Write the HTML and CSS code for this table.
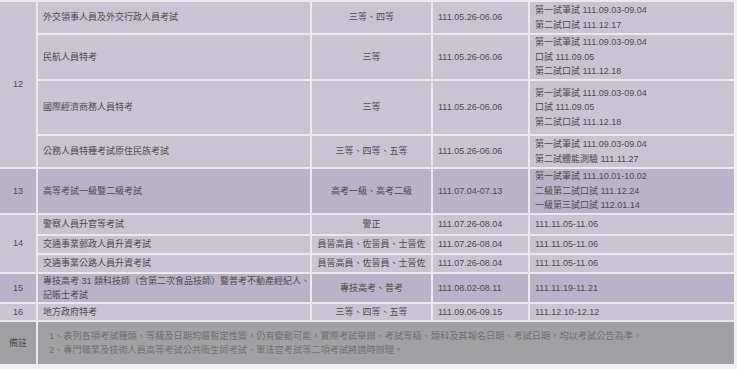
FILE: index.html
```html
<!DOCTYPE html>
<html lang="zh-Hant">
<head>
<meta charset="utf-8">
<title>考試日程</title>
<link rel="stylesheet" href="styles.css">
</head>
<body>
<table class="sched">
  <colgroup>
    <col class="c-no">
    <col class="c-name">
    <col class="c-level">
    <col class="c-reg">
    <col class="c-exam">
  </colgroup>
  <tbody>
    <tr class="light h33">
      <td class="no" rowspan="4">12</td>
      <td class="name">外交領事人員及外交行政人員考試</td>
      <td class="level">三等、四等</td>
      <td class="reg">111.05.26-06.06</td>
      <td class="exam">第一試筆試 111.09.03-09.04<br>第二試口試 111.12.17</td>
    </tr>
    <tr class="light h46">
      <td class="name">民航人員特考</td>
      <td class="level">三等</td>
      <td class="reg">111.05.26-06.06</td>
      <td class="exam">第一試筆試 111.09.03-09.04<br>口試 111.09.05<br>第二試口試 111.12.18</td>
    </tr>
    <tr class="light h55">
      <td class="name">國際經濟商務人員特考</td>
      <td class="level">三等</td>
      <td class="reg">111.05.26-06.06</td>
      <td class="exam">第一試筆試 111.09.03-09.04<br>口試 111.09.05<br>第二試口試 111.12.18</td>
    </tr>
    <tr class="light h33">
      <td class="name">公務人員特種考試原住民族考試</td>
      <td class="level">三等、四等、五等</td>
      <td class="reg">111.05.26-06.06</td>
      <td class="exam">第一試筆試 111.09.03-09.04<br>第二試體能測驗 111.11.27</td>
    </tr>
    <tr class="dark h46">
      <td class="no">13</td>
      <td class="name">高等考試一級暨二級考試</td>
      <td class="level">高考一級、高考二級</td>
      <td class="reg">111.07.04-07.13</td>
      <td class="exam">第一試筆試 111.10.01-10.02<br>二級第二試口試 111.12.24<br>一級第三試口試 112.01.14</td>
    </tr>
    <tr class="light h21">
      <td class="no" rowspan="3">14</td>
      <td class="name">警察人員升官等考試</td>
      <td class="level">警正</td>
      <td class="reg">111.07.26-08.04</td>
      <td class="exam">111.11.05-11.06</td>
    </tr>
    <tr class="light h19">
      <td class="name">交通事業郵政人員升資考試</td>
      <td class="level">員晉高員、佐晉員、士晉佐</td>
      <td class="reg">111.07.26-08.04</td>
      <td class="exam">111.11.05-11.06</td>
    </tr>
    <tr class="light h19">
      <td class="name">交通事業公路人員升資考試</td>
      <td class="level">員晉高員、佐晉員、士晉佐</td>
      <td class="reg">111.07.26-08.04</td>
      <td class="exam">111.11.05-11.06</td>
    </tr>
    <tr class="dark h30">
      <td class="no">15</td>
      <td class="name">專技高考 31 類科技師（含第二次食品技師）暨普考不動產經紀人、<br>記帳士考試</td>
      <td class="level">專技高考、普考</td>
      <td class="reg">111.08.02-08.11</td>
      <td class="exam">111.11.19-11.21</td>
    </tr>
    <tr class="light h18">
      <td class="no">16</td>
      <td class="name">地方政府特考</td>
      <td class="level">三等、四等、五等</td>
      <td class="reg">111.09.06-09.15</td>
      <td class="exam">111.12.10-12.12</td>
    </tr>
    <tr class="note h44">
      <td class="no note-head">備註</td>
      <td class="note-body" colspan="4">1、表列各項考試種類、等級及日期均屬暫定性質，仍有變動可能，實際考試舉辦、考試等級、類科及其報名日期、考試日期，均以考試公告為準。<br>2、專門職業及技術人員高等考試公共衛生師考試、軍法官考試等二項考試將適時辦理。</td>
    </tr>
  </tbody>
</table>
</body>
</html>
```

FILE: styles.css
```css
html, body {
  margin: 0;
  padding: 0;
}

body {
  background: #f1f0f3;
  font-family: "Liberation Sans", "Noto Sans CJK TC", sans-serif;
  font-size: 9px;
  color: #4c4c4e;
}

.sched {
  width: 734px;
  table-layout: fixed;
  border-collapse: separate;
  border-spacing: 0;
}

.c-no { width: 36px; }
.c-name { width: 274px; }
.c-level { width: 121px; }
.c-reg { width: 97px; }
.c-exam { width: 206px; }

.sched td {
  box-sizing: border-box;
  padding: 0 0 0 5px;
  line-height: 14.5px;
  vertical-align: middle;
  text-align: left;
  border-top: 2px solid #ebe8f0;
  border-left: 2px solid #ebe8f0;
  white-space: nowrap;
}

.sched td.no {
  border-left: none;
  text-align: center;
  padding: 0;
}

.sched td.level {
  text-align: center;
  padding: 0;
}

.light td { background: #cac3d4; }
.dark td { background: #bab2c8; }

.note td {
  background: #a1a1a3;
  color: #707072;
}

.note td.note-head {
  color: #4e4e50;
}

.note td.note-body {
  padding-left: 11px;
  font-size: 9.2px;
  line-height: 14px;
}

.h18 { height: 18px; }
.h19 { height: 19px; }
.h21 { height: 21px; }
.h30 { height: 30px; }
.h33 { height: 33px; }
.h44 { height: 44px; }
.h46 { height: 46px; }
.h55 { height: 55px; }

.h30 td.name { line-height: 14px; }
```
